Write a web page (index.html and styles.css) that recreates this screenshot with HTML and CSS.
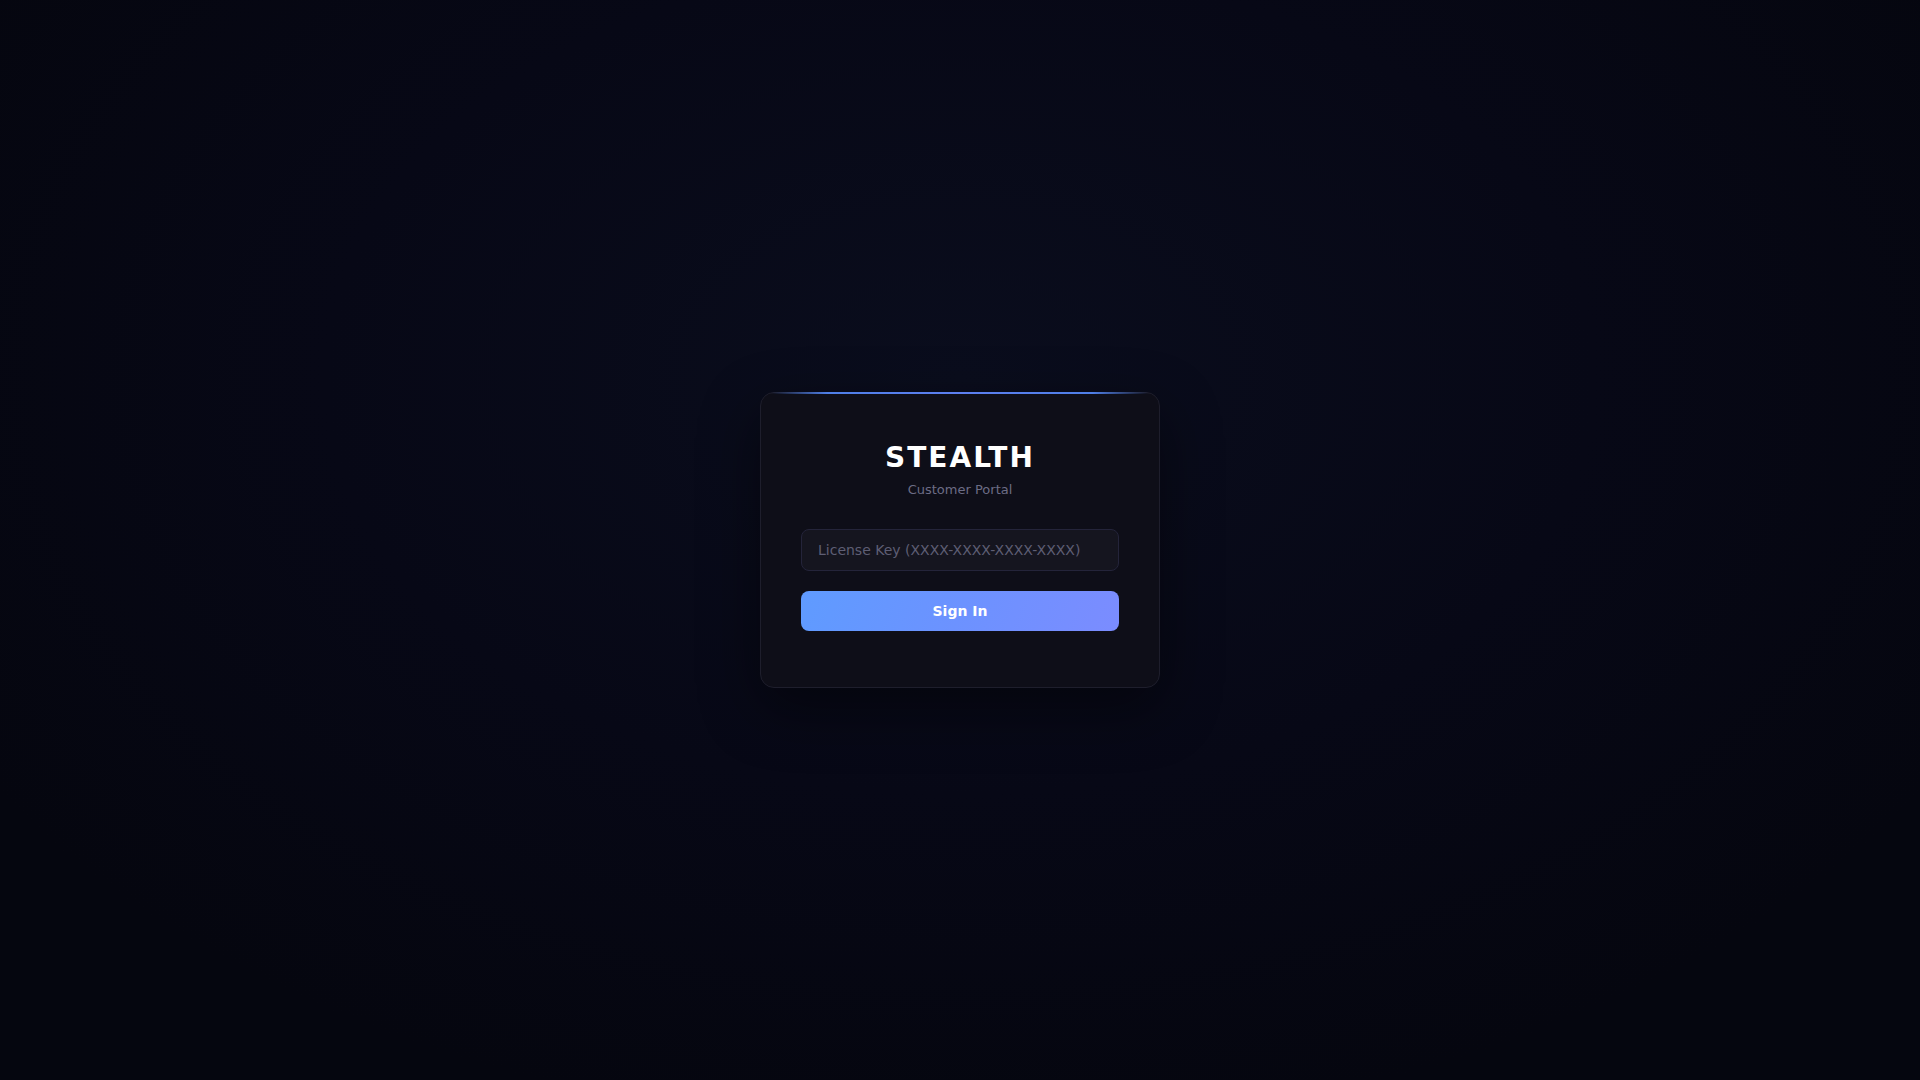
FILE: index.html
```html
<!DOCTYPE html>
<html lang="en">
<head>
    <meta charset="UTF-8">
    <meta name="viewport" content="width=device-width, initial-scale=1.0">
    <title>Stealth - Customer Portal</title>
    <link rel="stylesheet" href="styles.css">
</head>
<body>
    <div class="login-wrap">
        <div class="login-card">
            <h1 class="brand">STEALTH</h1>
            <p class="subtitle">Customer Portal</p>
            <form class="login-form" onsubmit="return false;">
                <input type="text" class="key-input" placeholder="License Key (XXXX-XXXX-XXXX-XXXX)">
                <button type="submit" class="btn-signin">Sign In</button>
            </form>
        </div>
    </div>
</body>
</html>
```

FILE: styles.css
```css
* { box-sizing: border-box; }
html, body { height: 100%; }
body { margin: 0; font-family: "DejaVu Sans", Verdana, sans-serif; color: #fff; background: radial-gradient(ellipse 60% 70% at 50% 35%, #0a0d1d 0%, #070816 55%, #05060f 100%); }
.login-wrap { min-height: 100%; display: flex; align-items: center; justify-content: center; }
.login-card { position: relative; width: 400px; padding: 48px 40px 56px; background: #0e0e18; border: 1px solid #1e1e2c; border-radius: 14px; box-shadow: 0 20px 60px rgba(0,0,0,0.45); text-align: center; }
.login-card::before { content: ""; position: absolute; top: -1px; left: 10px; right: 10px; height: 2px; background: linear-gradient(90deg, rgba(96,140,250,0) 0%, #4f7fe8 15%, #5d7ff0 50%, #4f7fe8 85%, rgba(96,140,250,0) 100%); }
.brand { margin: 0 0 8px; font-size: 28px; font-weight: bold; letter-spacing: 2px; line-height: 33px; color: #fff; }
.subtitle { margin: 0 0 32px; font-size: 13px; line-height: 15px; color: #6c6c85; }
.login-form { display: flex; flex-direction: column; gap: 20px; }
.key-input { width: 100%; height: 42px; padding: 0 16px; background: #15151f; border: 1px solid #24243a; border-radius: 8px; font-family: inherit; font-size: 14px; color: #ddd; outline: none; }
.key-input::placeholder { color: #5e5e74; }
.btn-signin { width: 100%; height: 40px; border: none; border-radius: 8px; background: linear-gradient(110deg, #5f9bff 0%, #6c92ff 50%, #7b8cff 100%); font-family: inherit; font-size: 14px; font-weight: bold; color: #fff; cursor: pointer; }
```
